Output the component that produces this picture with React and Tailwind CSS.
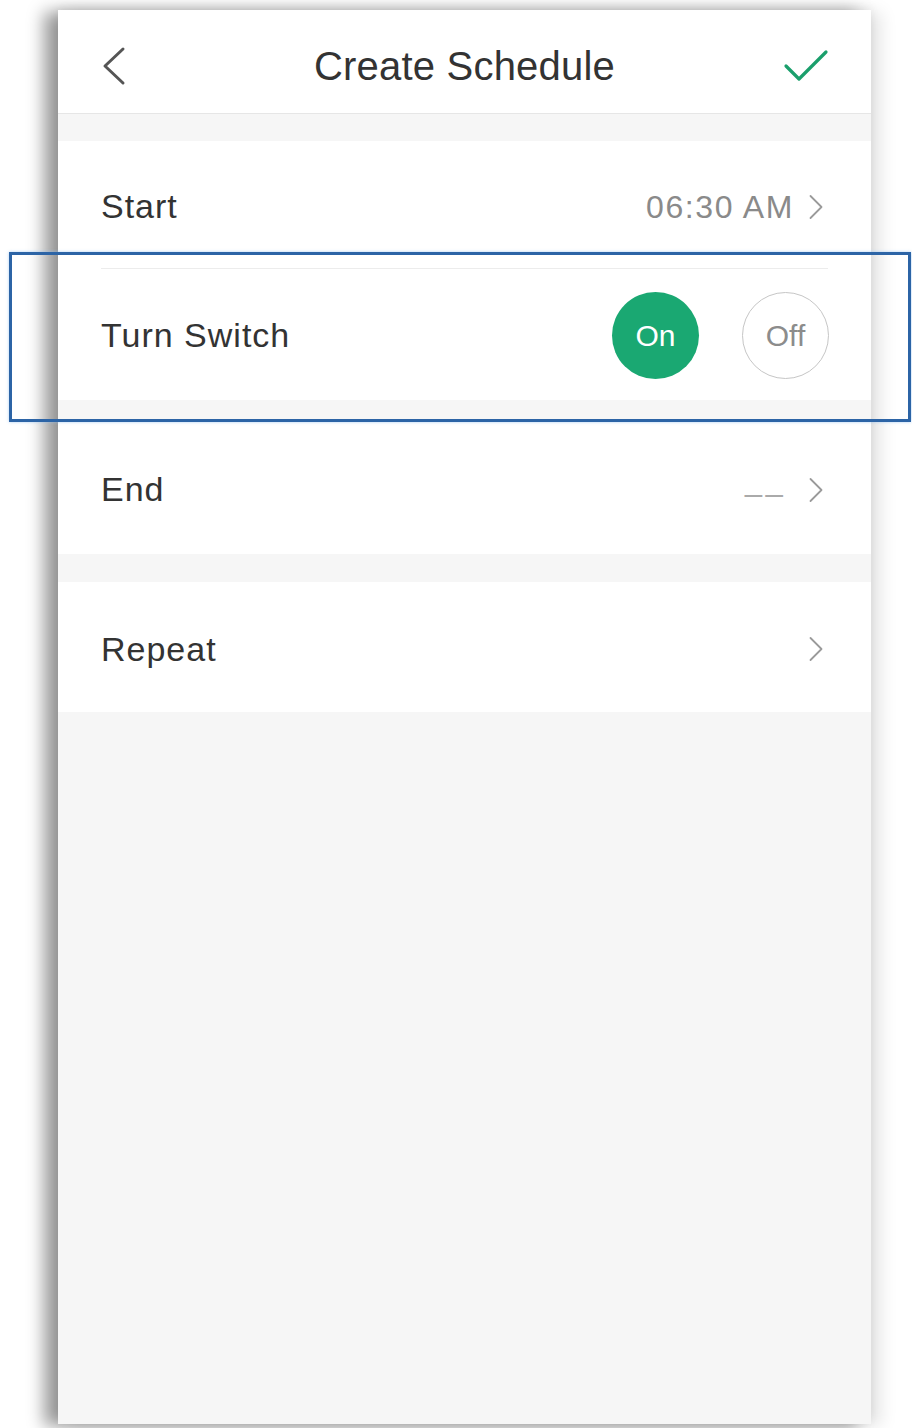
import React from 'react';

const Chevron = () => (
  <svg width="16" height="26" viewBox="0 0 16 26" fill="none">
    <path d="M2.5 2 L13.5 13 L2.5 24" stroke="#9a9a9a" strokeWidth="1.8" strokeLinecap="round" strokeLinejoin="round" />
  </svg>
);

function Row({ label, value, h, valueClass, gap = 'gap-[14px]' }) {
  return (
    <div className={`bg-white flex items-center justify-between pl-[43px] pr-[47px] pt-[4px] ${h}`}>
      <span className="text-[34px] tracking-[1px] text-[#333]">{label}</span>
      <div className={`flex items-center ${gap}`}>
        {value && <span className={valueClass}>{value}</span>}
        <Chevron />
      </div>
    </div>
  );
}

export default function App() {
  return (
    <div className="relative w-[912px] h-[1428px] bg-white pl-[58px] pt-[10px] font-['Liberation_Sans',Arial,sans-serif] overflow-hidden">
      <div className="w-[813px] h-[1414px] bg-[#f6f6f6] flex flex-col shadow-[-14px_2px_16px_rgba(0,0,0,0.4),10px_2px_16px_rgba(0,0,0,0.1),0_-4px_10px_rgba(0,0,0,0.05)]">
        {/* header */}
        <div className="h-[104px] bg-white border-b border-[#e6e6e6] flex items-center justify-between pl-[42px] pr-[42px] pt-[8px]">
          <div className="w-[48px] flex justify-start">
            <svg width="28" height="40" viewBox="0 0 28 40" fill="none">
              <path d="M23 3 L5 20 L23 37" stroke="#555" strokeWidth="3" strokeLinecap="round" strokeLinejoin="round" />
            </svg>
          </div>
          <h1 className="text-[40px] tracking-[0.2px] text-[#333] leading-none">Create Schedule</h1>
          <div className="w-[48px] flex justify-end">
            <svg width="46" height="34" viewBox="0 0 46 34" fill="none">
              <path d="M3 17 L16 30 L43 3" stroke="#1a9f6c" strokeWidth="3.2" strokeLinecap="round" strokeLinejoin="round" />
            </svg>
          </div>
        </div>

        <div className="h-[27px]" />

        <Row label="Start" value="06:30 AM" h="h-[127px]" valueClass="text-[32px] tracking-[1.6px] text-[#8a8a8a]" />

        {/* turn switch */}
        <div className="bg-white h-[132px] flex flex-col">
          <div className="mx-[43px] h-px bg-[#ececec]" />
          <div className="flex-1 flex items-center justify-between pl-[43px] pr-[42px] pt-[2px]">
            <span className="text-[34px] tracking-[1px] text-[#333]">Turn Switch</span>
            <div className="flex items-center gap-[43px]">
              <div className="w-[87px] h-[87px] rounded-full bg-[#1aa872] flex items-center justify-center text-white text-[30px]">On</div>
              <div className="w-[87px] h-[87px] rounded-full border-[1.5px] border-[#c6c6c6] flex items-center justify-center text-[#8c8c8c] text-[30px]">Off</div>
            </div>
          </div>
        </div>

        <div className="h-[21px]" />

        <Row label="End" value="––" h="h-[133px]" gap="gap-[22px]" valueClass="text-[32px] tracking-[3px] text-[#aaa] pt-[6px]" />

        <div className="h-[28px]" />

        <Row label="Repeat" h="h-[130px]" />
      </div>

      {/* annotation box */}
      <div className="absolute left-[9px] top-[252px] w-[902px] h-[170px] border-[3px] border-[#2c64a6] shadow-[0_0_3px_rgba(140,190,240,0.7)]" />
    </div>
  );
}
